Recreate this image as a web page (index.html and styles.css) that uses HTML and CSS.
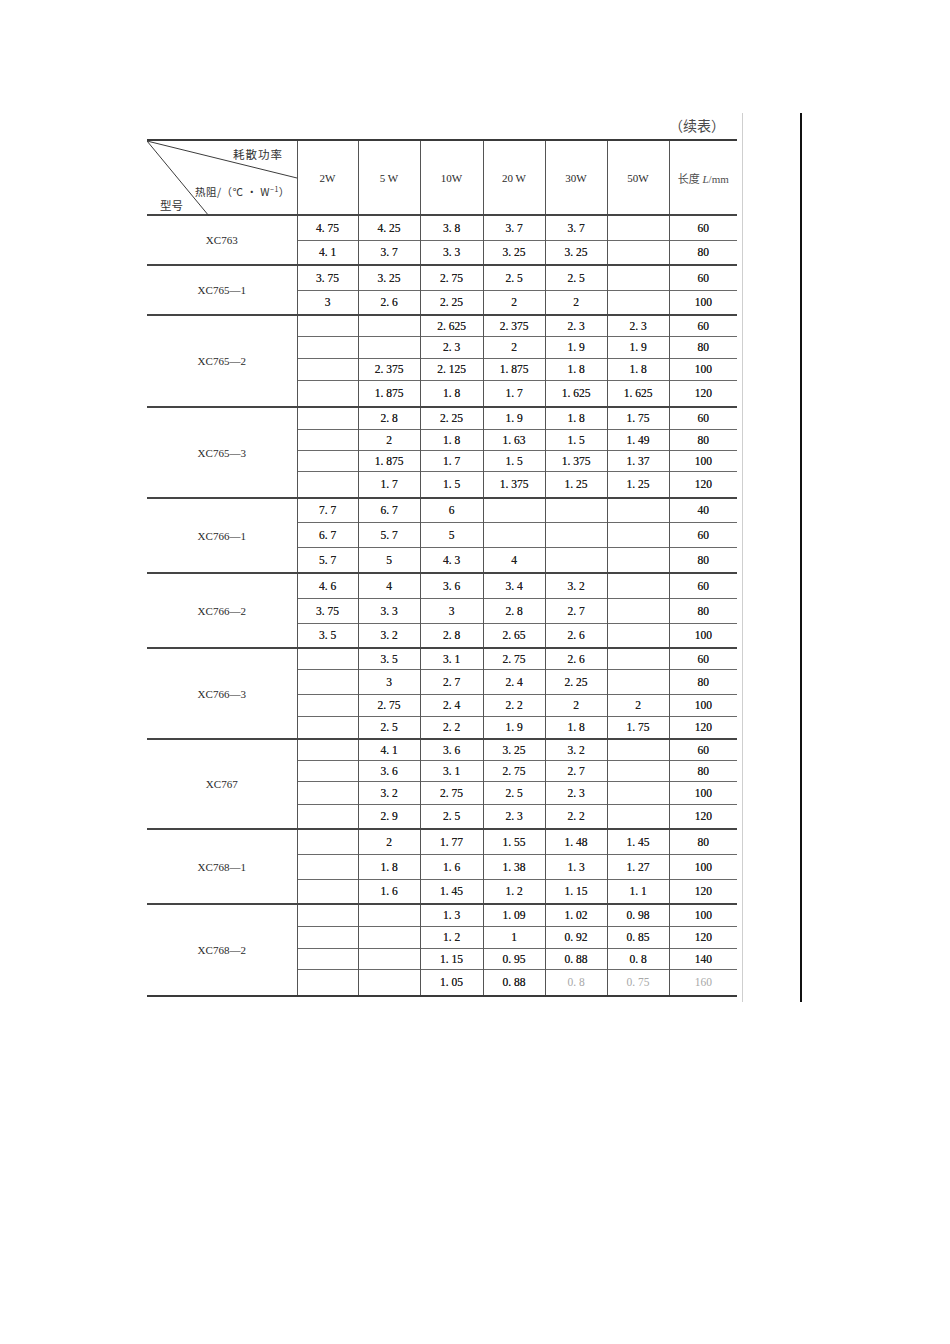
FILE: index.html
```html
<!DOCTYPE html>
<html lang="zh">
<head>
<meta charset="utf-8">
<title>续表</title>
<link rel="stylesheet" href="styles.css">
</head>
<body>
<div class="page">
  <div class="sheet">
    <div class="caption">（续表）</div>
    <table class="spec">
      <colgroup>
        <col class="c-model"><col class="c61"><col class="c62"><col class="c63"><col class="c62"><col class="c62"><col class="c62"><col class="c68">
      </colgroup>
      <thead>
        <tr class="head">
          <th class="diag">
            <svg class="diag-lines" viewBox="0 0 150 75" width="150" height="75" aria-hidden="true">
              <line x1="0" y1="0" x2="150" y2="37" />
              <line x1="0" y1="0" x2="62" y2="75" />
            </svg>
            <span class="d-top">耗散功率</span>
            <span class="d-mid">热阻/（℃ · W<sup>−1</sup>）</span>
            <span class="d-bot">型号</span>
          </th>
          <th>2W</th>
          <th>5 W</th>
          <th>10W</th>
          <th>20 W</th>
          <th>30W</th>
          <th>50W</th>
          <th class="len">长度 <i>L</i>/mm</th>
        </tr>
      </thead>
      <tbody>
        <tr class="grp r25"><td class="model" rowspan="2">XC763</td><td>4. 75</td><td>4. 25</td><td>3. 8</td><td>3. 7</td><td>3. 7</td><td></td><td>60</td></tr>
        <tr class="r25"><td>4. 1</td><td>3. 7</td><td>3. 3</td><td>3. 25</td><td>3. 25</td><td></td><td>80</td></tr>

        <tr class="grp r25"><td class="model" rowspan="2">XC765—1</td><td>3. 75</td><td>3. 25</td><td>2. 75</td><td>2. 5</td><td>2. 5</td><td></td><td>60</td></tr>
        <tr class="r25"><td>3</td><td>2. 6</td><td>2. 25</td><td>2</td><td>2</td><td></td><td>100</td></tr>

        <tr class="grp r21"><td class="model" rowspan="4">XC765—2</td><td></td><td></td><td>2. 625</td><td>2. 375</td><td>2. 3</td><td>2. 3</td><td>60</td></tr>
        <tr class="r22"><td></td><td></td><td>2. 3</td><td>2</td><td>1. 9</td><td>1. 9</td><td>80</td></tr>
        <tr class="r22"><td></td><td>2. 375</td><td>2. 125</td><td>1. 875</td><td>1. 8</td><td>1. 8</td><td>100</td></tr>
        <tr class="r27"><td></td><td>1. 875</td><td>1. 8</td><td>1. 7</td><td>1. 625</td><td>1. 625</td><td>120</td></tr>

        <tr class="grp r22"><td class="model" rowspan="4">XC765—3</td><td></td><td>2. 8</td><td>2. 25</td><td>1. 9</td><td>1. 8</td><td>1. 75</td><td>60</td></tr>
        <tr class="r21"><td></td><td>2</td><td>1. 8</td><td>1. 63</td><td>1. 5</td><td>1. 49</td><td>80</td></tr>
        <tr class="r21"><td></td><td>1. 875</td><td>1. 7</td><td>1. 5</td><td>1. 375</td><td>1. 37</td><td>100</td></tr>
        <tr class="r27"><td></td><td>1. 7</td><td>1. 5</td><td>1. 375</td><td>1. 25</td><td>1. 25</td><td>120</td></tr>

        <tr class="grp r24"><td class="model" rowspan="3">XC766—1</td><td>7. 7</td><td>6. 7</td><td>6</td><td></td><td></td><td></td><td>40</td></tr>
        <tr class="r25"><td>6. 7</td><td>5. 7</td><td>5</td><td></td><td></td><td></td><td>60</td></tr>
        <tr class="r26"><td>5. 7</td><td>5</td><td>4. 3</td><td>4</td><td></td><td></td><td>80</td></tr>

        <tr class="grp r25"><td class="model" rowspan="3">XC766—2</td><td>4. 6</td><td>4</td><td>3. 6</td><td>3. 4</td><td>3. 2</td><td></td><td>60</td></tr>
        <tr class="r25"><td>3. 75</td><td>3. 3</td><td>3</td><td>2. 8</td><td>2. 7</td><td></td><td>80</td></tr>
        <tr class="r25"><td>3. 5</td><td>3. 2</td><td>2. 8</td><td>2. 65</td><td>2. 6</td><td></td><td>100</td></tr>

        <tr class="grp r21"><td class="model" rowspan="4">XC766—3</td><td></td><td>3. 5</td><td>3. 1</td><td>2. 75</td><td>2. 6</td><td></td><td>60</td></tr>
        <tr class="r25"><td></td><td>3</td><td>2. 7</td><td>2. 4</td><td>2. 25</td><td></td><td>80</td></tr>
        <tr class="r22"><td></td><td>2. 75</td><td>2. 4</td><td>2. 2</td><td>2</td><td>2</td><td>100</td></tr>
        <tr class="r23"><td></td><td>2. 5</td><td>2. 2</td><td>1. 9</td><td>1. 8</td><td>1. 75</td><td>120</td></tr>

        <tr class="grp r21"><td class="model" rowspan="4">XC767</td><td></td><td>4. 1</td><td>3. 6</td><td>3. 25</td><td>3. 2</td><td></td><td>60</td></tr>
        <tr class="r21"><td></td><td>3. 6</td><td>3. 1</td><td>2. 75</td><td>2. 7</td><td></td><td>80</td></tr>
        <tr class="r23"><td></td><td>3. 2</td><td>2. 75</td><td>2. 5</td><td>2. 3</td><td></td><td>100</td></tr>
        <tr class="r25"><td></td><td>2. 9</td><td>2. 5</td><td>2. 3</td><td>2. 2</td><td></td><td>120</td></tr>

        <tr class="grp r25"><td class="model" rowspan="3">XC768—1</td><td></td><td>2</td><td>1. 77</td><td>1. 55</td><td>1. 48</td><td>1. 45</td><td>80</td></tr>
        <tr class="r25"><td></td><td>1. 8</td><td>1. 6</td><td>1. 38</td><td>1. 3</td><td>1. 27</td><td>100</td></tr>
        <tr class="r25"><td></td><td>1. 6</td><td>1. 45</td><td>1. 2</td><td>1. 15</td><td>1. 1</td><td>120</td></tr>

        <tr class="grp r22"><td class="model" rowspan="4">XC768—2</td><td></td><td></td><td>1. 3</td><td>1. 09</td><td>1. 02</td><td>0. 98</td><td>100</td></tr>
        <tr class="r22"><td></td><td></td><td>1. 2</td><td>1</td><td>0. 92</td><td>0. 85</td><td>120</td></tr>
        <tr class="r21"><td></td><td></td><td>1. 15</td><td>0. 95</td><td>0. 88</td><td>0. 8</td><td>140</td></tr>
        <tr class="r27 last"><td></td><td></td><td>1. 05</td><td>0. 88</td><td class="faint">0. 8</td><td class="faint">0. 75</td><td class="faint">160</td></tr>
      </tbody>
    </table>
  </div>
  <div class="edge"></div>
</div>
</body>
</html>
```

FILE: styles.css
```css
html, body {
  margin: 0;
  padding: 0;
  background: #ffffff;
}

body {
  font-family: "Liberation Serif", "Noto Sans CJK SC", serif;
  color: #1f1f1f;
}

.page {
  display: flex;
  align-items: flex-start;
  padding: 113px 0 0 147px;
}

.sheet {
  width: 596px;
  height: 889px;
  box-sizing: border-box;
  border-right: 1px solid #cfcfcf;
}

.edge {
  margin-left: 57px;
  width: 2px;
  height: 889px;
  background: #111111;
}

.caption {
  width: 590px;
  height: 26px;
  box-sizing: border-box;
  padding-right: 12px;
  text-align: right;
  line-height: 24px;
  font-size: 14px;
  font-family: "Noto Sans CJK SC", "Liberation Serif", sans-serif;
  color: #4a4a4a;
}

.spec {
  width: 590px;
  table-layout: fixed;
  border-collapse: collapse;
  border-top: 2px solid #3a3a3a;
  border-bottom: 2px solid #3a3a3a;
  font-size: 11.5px;
}

.c-model { width: 150px; }
.c61 { width: 61px; }
.c62 { width: 62px; }
.c63 { width: 63px; }
.c68 { width: 68px; }

.spec th,
.spec td {
  padding: 0;
  text-align: center;
  vertical-align: middle;
  border-left: 1px solid #555555;
  border-top: 1px solid #6a6a6a;
  white-space: nowrap;
  text-shadow: 0 0 0.25px #444444;
}

.spec th:first-child,
.spec td.model {
  border-left: none;
}

.head {
  height: 75px;
}

.head th {
  font-weight: normal;
  font-size: 11px;
  border-top: none;
  border-bottom: 1px solid #4a4a4a;
  text-shadow: none;
  color: #2a2a2a;
}

.head th.len {
  font-family: "Liberation Serif", "Noto Sans CJK SC", serif;
  font-size: 11px;
  color: #4f4f4f;
}

.head th.diag {
  position: relative;
  padding: 0;
}

.diag-lines {
  position: absolute;
  left: 0;
  top: 0;
  display: block;
}

.diag-lines line {
  stroke: #3c3c3c;
  stroke-width: 1;
}

.diag span {
  position: absolute;
  font-family: "Noto Sans CJK SC", "Liberation Serif", sans-serif;
  font-size: 11.5px;
  line-height: 14px;
  color: #333333;
  white-space: nowrap;
}

.d-top { left: 86px; top: 6px; letter-spacing: 1px; }
.d-mid { left: 48px; top: 44px; }
.d-bot { left: 13px; top: 57px; }

.diag span.d-mid {
  font-size: 10.5px;
  letter-spacing: 0.5px;
}

.d-mid sup {
  font-size: 7px;
  line-height: 0;
}

.spec tr.grp td {
  border-top: 2px solid #454545;
}

.spec td.model {
  font-size: 11px;
  color: #2a2a2a;
  text-shadow: none;
}

.r21 { height: 21px; }
.r22 { height: 22px; }
.r23 { height: 23px; }
.r24 { height: 24px; }
.r25 { height: 25px; }
.r26 { height: 26px; }
.r27 { height: 27px; }

.spec td.faint {
  color: #a8a8a8;
  text-shadow: none;
}
```
